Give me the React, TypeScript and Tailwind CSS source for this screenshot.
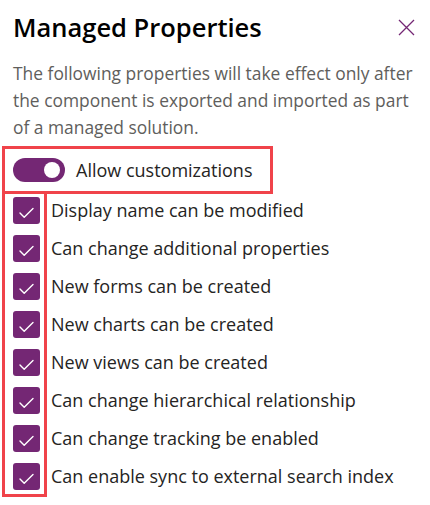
const options = [
  "Display name can be modified",
  "Can change additional properties",
  "New forms can be created",
  "New charts can be created",
  "New views can be created",
  "Can change hierarchical relationship",
  "Can change tracking be enabled",
  "Can enable sync to external search index",
];

function CheckBox() {
  return (
    <span className="flex h-[27px] w-[27px] items-center justify-center rounded-[3px] bg-[#742774]">
      <svg width="27" height="27" viewBox="0 0 27 27" fill="none">
        <path d="M7 16l4.2 4.2L20 11.5" stroke="white" strokeWidth="1.4" strokeLinecap="round" strokeLinejoin="round" />
      </svg>
    </span>
  );
}

export default function App() {
  return (
    <div className="h-[505px] w-[430px] bg-white font-['Open_Sans',sans-serif] text-[#252423]">
      <div className="flex items-start justify-between pl-[13px] pr-[15px] pt-[8px]">
        <h1 className="text-[25.5px] font-semibold leading-[38px] text-black">Managed Properties</h1>
        <button className="mt-[11px] text-[#742774]">
          <svg width="17" height="17" viewBox="0 0 17 17" fill="none">
            <path d="M1 1l15 15M16 1L1 16" stroke="currentColor" strokeWidth="1.3" />
          </svg>
        </button>
      </div>

      <p className="mt-[14px] px-[13px] text-[17.4px] leading-[27px] text-[#605e5c]">
        The following properties will take effect only after the component is exported and imported as part of a managed solution.
      </p>

      <div className="ml-[2px] mt-[5px] flex w-[271px] items-center gap-[11px] border-[3px] border-[#f0434a] py-[9px] pl-[8px]">
        <span className="flex h-[24px] w-[52px] items-center justify-end rounded-full bg-[#742774] pr-[5px]">
          <span className="h-[16px] w-[16px] rounded-full bg-white" />
        </span>
        <span className="text-[18px] leading-[23px]">Allow customizations</span>
      </div>

      <div className="flex">
        <div className="ml-[2px] flex w-[45px] flex-col gap-[11px] border-x-[3px] border-b-[3px] border-[#f0434a] pb-[4px] pl-[8px] pt-[3px]">
          {options.map((o) => (
            <CheckBox key={o} />
          ))}
        </div>
        <div className="ml-[4px] flex flex-col gap-[11px] pt-[3px]">
          {options.map((o) => (
            <span key={o} className="flex h-[27px] items-center text-[18px] whitespace-nowrap">
              {o}
            </span>
          ))}
        </div>
      </div>
    </div>
  );
}
